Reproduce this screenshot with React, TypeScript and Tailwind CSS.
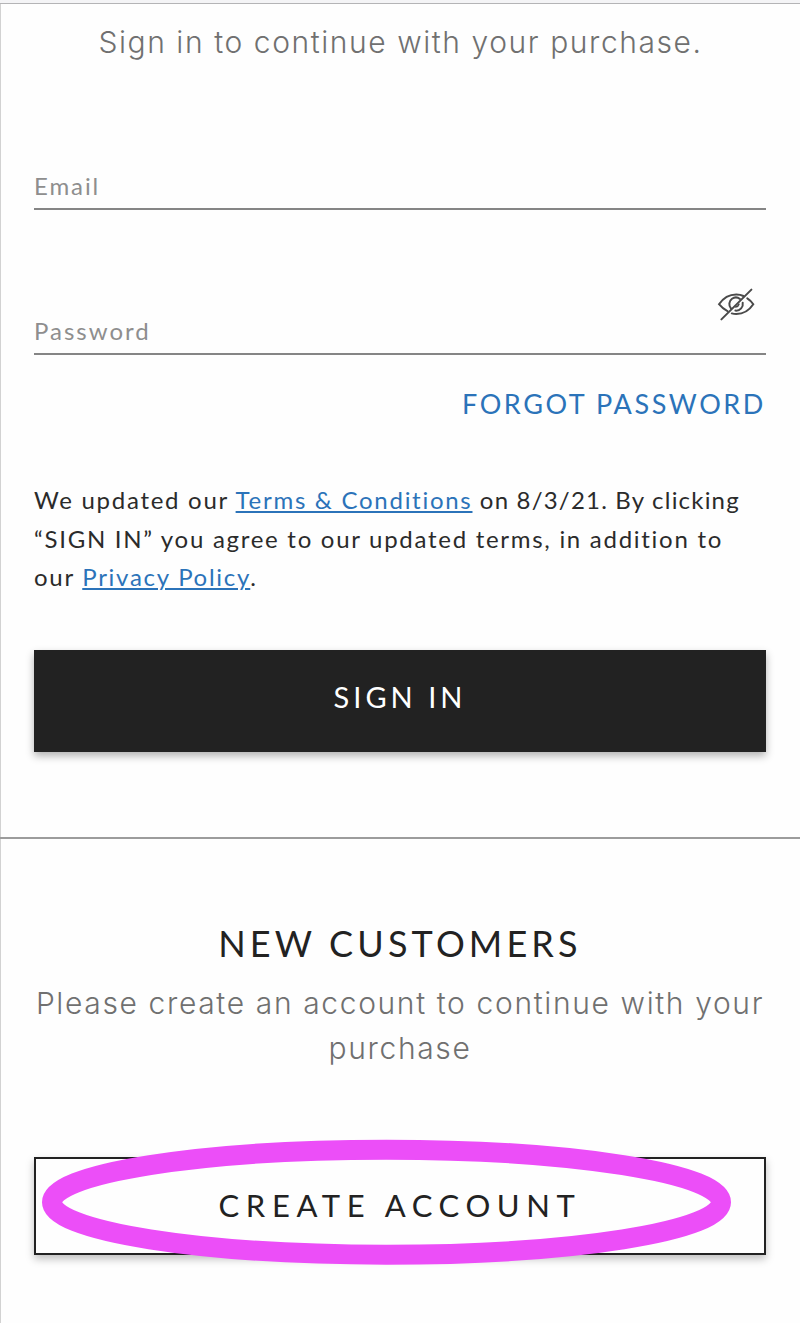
import React from "react";

function HiddenEye() {
  return (
    <svg width="38" height="34" viewBox="0 0 38 34" fill="none" stroke="#4a4a4a" strokeWidth="2" strokeLinecap="round">
      <path d="M10.500 24.200C6.800 22.400 4.200 19.900 2 17.200C5.500 12 11.500 7.400 19.300 7.400C22.200 7.400 24.400 7.900 26.400 9" />
      <path d="M30.300 11.300C32.800 12.900 34.800 14.900 36.300 17.200C32.500 22.900 26.500 27 19.300 27C17.600 27 16.200 26.800 14.800 26.400" />
      <path d="M14 21.500C11.400 18.500 11.900 14 15 11.800C17.500 10 20.700 10.200 23 12" />
      <path d="M25.700 15.700C26.500 20 23.200 24 18.400 23.600" />
      <path d="M21.900 17.300C21.500 18.700 20.300 19.800 18.700 20" strokeWidth="1.600" />
      <path d="M34.400 2.600L4.400 32.400" />
    </svg>
  );
}

export default function App() {
  return (
    <div className="relative flex h-[1323px] w-[800px] flex-col border-l border-[#d2d2d2] bg-[#fefefe] font-[Lato,sans-serif] text-[#222]">
      <div className="-ml-px h-1 shrink-0 border-b border-[#b4b4b6] bg-[#f4f4f6]" />
      <p className="mt-[16px] text-center font-[Inter,sans-serif] text-[30px] leading-[45px] font-light tracking-[1.57px] whitespace-nowrap text-[#707070]">
        Sign in to continue with your purchase.
      </p>
      <form className="flex flex-col pr-[34px] pl-[33px]">
        <label className="mt-[103px] border-b-2 border-[#858585] pb-[4px] text-[24px] leading-9 tracking-[1.9px] text-[#8e8e8e]">
          Email
        </label>
        <label className="mt-[77px] flex items-end justify-between border-b-2 border-[#858585] pb-[4px] text-[24px] leading-9 tracking-[2px] text-[#8e8e8e]">
          <span>Password</span>
          <span className="mr-[11px] mb-[28px]">
            <HiddenEye />
          </span>
        </label>
        <a className="mt-[31px] self-end text-[27px] leading-9 tracking-[2.6px] whitespace-nowrap text-[#2b73b9]">FORGOT PASSWORD</a>
        <p className="mt-[59px] text-[24px] leading-[38.5px] tracking-[1.72px] whitespace-nowrap text-[#2b2b2b]">
          We updated our <a className="text-[#2b73b9] underline decoration-2 underline-offset-2">Terms &amp; Conditions</a>
          <span className="tracking-[1.2px]"> on 8/3/21. By clicking</span>
          <br />
          “SIGN IN” you agree to our updated terms, in addition to
          <br />
          our <a className="text-[#2b73b9] underline decoration-2 underline-offset-2">Privacy Policy</a>.
        </p>
        <button type="button" className="mt-[53px] flex h-[102px] items-center justify-center bg-[#222] pb-[7px] text-[29px] tracking-[4px] text-white shadow-[0_4px_8px_rgba(0,0,0,0.3)]">
          SIGN IN
        </button>
      </form>
      <hr className="mt-[85.5px] -ml-px border-t-2 border-[#9c9c9c]" />
      <section className="flex flex-col pr-[34px] pl-[33px] text-center">
        <h2 className="mt-[82px] text-[36px] leading-[44px] tracking-[4.15px]">NEW CUSTOMERS</h2>
        <p className="mt-[16px] font-[Inter,sans-serif] text-[30px] leading-[45px] font-light tracking-[1.63px] whitespace-nowrap text-[#707070]">
          Please create an account to continue with your
          <br />
          purchase
        </p>
        <button type="button" className="mt-[86px] flex h-[98px] items-center justify-center border-2 border-[#222] bg-[#fefefe] pb-0.5 text-[31px] tracking-[6.6px] shadow-[0_4px_8px_rgba(0,0,0,0.25)]">
          CREATE ACCOUNT
        </button>
      </section>
      <svg className="pointer-events-none absolute top-[1130px] left-[30px]" width="720" height="144" fill="none">
        <ellipse cx="355.5" cy="72.2" rx="334.5" ry="52.500" stroke="#ec4ef8" strokeWidth="20" />
      </svg>
    </div>
  );
}
